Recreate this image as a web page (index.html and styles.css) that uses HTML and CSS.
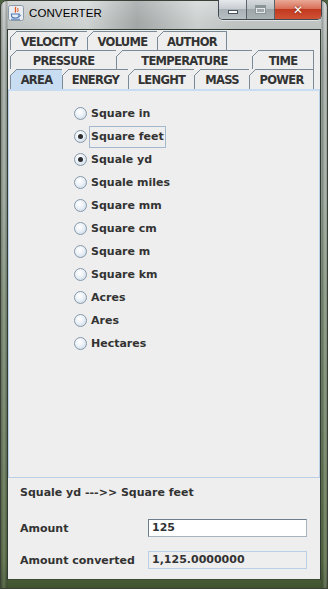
FILE: index.html
```html
<!DOCTYPE html>
<html lang="en">
<head>
  <meta charset="UTF-8" />
  <title>CONVERTER</title>
  <link rel="stylesheet" href="styles.css">
</head>
<body>

<div class="window">
  <div class="titlebar">
    <svg class="app-icon" width="16" height="16" viewBox="0 0 16 16">
      <rect x="0.5" y="0.5" width="15" height="15" rx="2" fill="#e9edf2" stroke="#8c9aa8"/>
      <path d="M8 2 C6 4 9 5 7 7.5" fill="none" stroke="#e2591f" stroke-width="1.3"/>
      <path d="M10 3 C9 4.5 11 5 9.5 7" fill="none" stroke="#e2591f" stroke-width="1"/>
      <path d="M3.5 9 H11 V10.5 C11 12.5 9.5 13 7.5 13 C5 13 3.5 12.5 3.5 10.5 Z" fill="none" stroke="#4a77b4" stroke-width="1.1"/>
      <path d="M11 9.6 C13 9.4 13 11.6 11 11.4" fill="none" stroke="#4a77b4" stroke-width="1"/>
      <path d="M3 14.2 H12" stroke="#4a77b4" stroke-width="1"/>
    </svg>
    <span class="title">CONVERTER</span>
    <div class="controls">
      <div class="ctl min"><span class="dash"></span></div>
      <div class="ctl max"><span class="box"></span></div>
      <div class="ctl close">&#x2715;</div>
    </div>
  </div>

  <div class="client">
    <div class="tabs">
      <div class="tab-row">
        <div class="tab w77">VELOCITY</div>
        <div class="tab w70">VOLUME</div>
        <div class="tab w70">AUTHOR</div>
      </div>
      <div class="tab-row">
        <div class="tab w106">PRESSURE</div>
        <div class="tab w136">TEMPERATURE</div>
        <div class="tab w62">TIME</div>
      </div>
      <div class="tab-row front">
        <div class="tab w52 selected">AREA</div>
        <div class="tab w66">ENERGY</div>
        <div class="tab w66">LENGHT</div>
        <div class="tab w55">MASS</div>
        <div class="tab w65">POWER</div>
      </div>
    </div>

    <div class="panel">
      <div class="option"><span class="radio"></span><span class="text">Square in</span></div>
      <div class="option"><span class="radio on"></span><span class="text focus">Square feet</span></div>
      <div class="option"><span class="radio on"></span><span class="text">Squale yd</span></div>
      <div class="option"><span class="radio"></span><span class="text">Squale miles</span></div>
      <div class="option"><span class="radio"></span><span class="text">Square mm</span></div>
      <div class="option"><span class="radio"></span><span class="text">Square cm</span></div>
      <div class="option"><span class="radio"></span><span class="text">Square m</span></div>
      <div class="option"><span class="radio"></span><span class="text">Square km</span></div>
      <div class="option"><span class="radio"></span><span class="text">Acres</span></div>
      <div class="option"><span class="radio"></span><span class="text">Ares</span></div>
      <div class="option"><span class="radio"></span><span class="text">Hectares</span></div>
    </div>

    <div class="footer">
      <div class="status">Squale yd ---&gt;&gt; Square feet</div>
      <div class="field-row">
        <span class="label">Amount</span>
        <div class="input">125</div>
      </div>
      <div class="field-row second">
        <span class="label">Amount converted</span>
        <div class="input readonly">1,125.0000000</div>
      </div>
    </div>
  </div>
</div>

</body>
</html>
```

FILE: styles.css
```css
* {
  box-sizing: border-box;
}

body {
  margin: 0;
  padding: 0;
  background: #4e6340;
  font-family: 'DejaVu Sans', sans-serif;
}

.window {
  width: 328px;
  height: 589px;
  padding: 0 6px 8px 6px;
  display: flex;
  flex-direction: column;
  border: 1px solid #3b4136;
  border-radius: 7px 7px 0 0;
  background:
    linear-gradient(to right, rgba(60, 70, 60, 0.35) 0, rgba(255, 255, 255, 0.15) 3px, rgba(40, 50, 40, 0.3) 6px, transparent 7px, transparent 320px, rgba(40, 50, 40, 0.3) 321px, rgba(255, 255, 255, 0.2) 324px, rgba(40, 50, 40, 0.35) 328px),
    linear-gradient(to bottom, #d2d6d6 0, #c0c5c4 20px, #aab1ad 60px, #9aa59a 200px, #7f8f78 300px, #6c7e60 420px, #56693f 560px, #3f5230 589px);
}

/* title bar */
.titlebar {
  height: 28px;
  display: flex;
  align-items: flex-start;
  flex-shrink: 0;
  margin: 0 -1px 0 0;
  background: linear-gradient(to right, transparent 0, rgba(255, 255, 255, 0.25) 80px, rgba(80, 85, 85, 0.25) 130px, rgba(255, 255, 255, 0.2) 190px, transparent 230px);
}

.app-icon {
  margin: 4px 0 0 1px;
  flex-shrink: 0;
}

.title {
  margin: 6px 0 0 5px;
  font-family: 'Liberation Sans', sans-serif;
  font-size: 11.5px;
  color: #000;
  letter-spacing: 0.1px;
}

.controls {
  margin-left: auto;
  margin-top: -1px;
  display: flex;
  height: 20px;
  border: 1px solid #3f4a52;
  border-top: none;
  border-radius: 0 0 5px 5px;
  overflow: hidden;
  box-shadow: 0 1px 0 rgba(255, 255, 255, 0.5);
}

.ctl {
  height: 100%;
  display: flex;
  align-items: center;
  justify-content: center;
}

.ctl.min, .ctl.max {
  width: 28px;
  border-right: 1px solid #58636b;
  background: linear-gradient(to bottom, #e6e9ec 0, #c9ced2 45%, #a9b1b6 50%, #b8bfc3 100%);
}

.ctl.max {
  background: linear-gradient(to bottom, #d6dadc 0, #bcc2c5 45%, #9ea6aa 50%, #aab1b4 100%);
}

.dash {
  width: 10px;
  height: 4px;
  margin-top: 5px;
  background: #fff;
  border: 1px solid #4b5560;
}

.box {
  width: 11px;
  height: 9px;
  border: 1px solid #8b9499;
  border-top-width: 3px;
  background: transparent;
  box-shadow: inset 0 0 0 1px #e4e8ea;
}

.ctl.close {
  width: 46px;
  background: linear-gradient(to bottom, #e9a996 0, #d8705a 45%, #c2391f 50%, #d05234 100%);
  color: #fff;
  font-family: 'DejaVu Sans', sans-serif;
  font-weight: bold;
  font-size: 12px;
  text-shadow: 0 0 2px #5a1a0c;
}

/* client area */
.client {
  flex: 1;
  display: flex;
  flex-direction: column;
  background: #eeeeee;
  border: 1px solid #2f3a33;
  border-bottom-color: #3c4a34;
}

.tabs {
  padding: 1px 0 0 2px;
}

.tab-row {
  display: flex;
  height: 19px;
}

.tab-row.front {
  height: 20px;
}

.tab {
  position: relative;
  display: flex;
  align-items: center;
  justify-content: center;
  border-left: 1px solid #7a8a99;
  border-top: 1px solid #7a8a99;
  font-size: 11.5px;
  font-weight: bold;
  letter-spacing: -0.7px;
  color: #333;
  padding-top: 1px;
}

.tab:last-child {
  border-right: 1px solid #7a8a99;
}

.tab::before {
  content: '';
  position: absolute;
  left: -1px;
  top: -1px;
  width: 7px;
  height: 7px;
  background: linear-gradient(to bottom right, #eeeeee 0, #eeeeee calc(50% - 0.7px), #7a8a99 calc(50% - 0.7px), #7a8a99 calc(50% + 0.7px), transparent calc(50% + 0.7px));
}

.tab.selected {
  background: #c8ddf2;
}

.w52 { width: 52px; }
.w55 { width: 55px; }
.w62 { width: 62px; }
.w65 { width: 65px; }
.w66 { width: 66px; }
.w70 { width: 70px; }
.w77 { width: 77px; }
.w106 { width: 106px; }
.w136 { width: 136px; }

/* radio panel */
.panel {
  height: 389px;
  flex-shrink: 0;
  border: 1px solid #b8cfe5;
  border-top: 2px solid #c8ddf2;
  padding: 11px 0 0 65px;
}

.option {
  display: flex;
  align-items: center;
  height: 23px;
}

.radio {
  width: 13px;
  height: 13px;
  border-radius: 50%;
  border: 1px solid #8799aa;
  background: radial-gradient(circle at 40% 35%, #ffffff 0, #eef3f8 40%, #c3d3e3 100%);
  margin-right: 2px;
  display: flex;
  align-items: center;
  justify-content: center;
}

.radio.on::after {
  content: '';
  width: 5px;
  height: 5px;
  border-radius: 50%;
  background: #2b2f33;
}

.text {
  padding: 1px 1px 2px 1px;
  border: 1px solid transparent;
  font-size: 11px;
  font-weight: bold;
  color: #333;
  line-height: 17px;
}

.text.focus {
  border-color: #a3b8cc;
}

/* bottom fields */
.footer {
  padding: 0 12px;
  font-size: 11px;
  font-weight: bold;
  color: #333;
}

.status {
  margin-top: 7px;
  line-height: 16px;
}

.field-row {
  display: grid;
  grid-template-columns: 128px 159px;
  align-items: center;
  height: 18px;
  margin-top: 18px;
}

.field-row.second {
  margin-top: 14px;
}

.input {
  height: 18px;
  padding: 0 3px;
  line-height: 16px;
  background: #fff;
  border: 1px solid;
  border-color: #6f7c89 #a9b3bd #a9b3bd #6f7c89;
}

.input.readonly {
  background: #eeeeee;
  border-color: #b8cfe5;
}
```
